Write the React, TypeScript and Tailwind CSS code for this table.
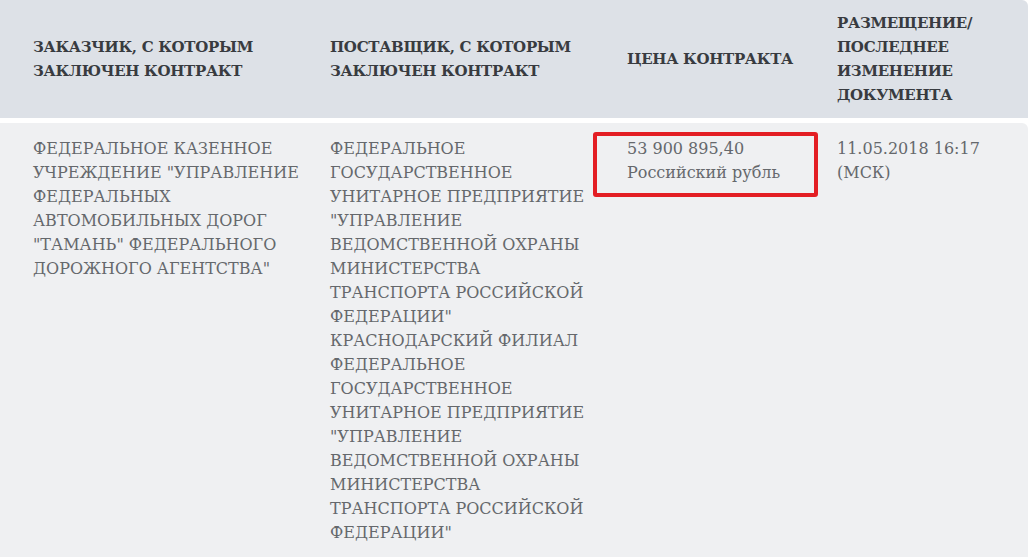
import React from "react";

const headers: string[][] = [
  ["ЗАКАЗЧИК, С КОТОРЫМ", "ЗАКЛЮЧЕН КОНТРАКТ"],
  ["ПОСТАВЩИК, С КОТОРЫМ", "ЗАКЛЮЧЕН КОНТРАКТ"],
  ["ЦЕНА КОНТРАКТА"],
  ["РАЗМЕЩЕНИЕ/", "ПОСЛЕДНЕЕ", "ИЗМЕНЕНИЕ", "ДОКУМЕНТА"],
];

const customer = [
  "ФЕДЕРАЛЬНОЕ КАЗЕННОЕ",
  'УЧРЕЖДЕНИЕ "УПРАВЛЕНИЕ',
  "ФЕДЕРАЛЬНЫХ",
  "АВТОМОБИЛЬНЫХ ДОРОГ",
  '"ТАМАНЬ" ФЕДЕРАЛЬНОГО',
  'ДОРОЖНОГО АГЕНТСТВА"',
];

const supplier = [
  "ФЕДЕРАЛЬНОЕ",
  "ГОСУДАРСТВЕННОЕ",
  "УНИТАРНОЕ ПРЕДПРИЯТИЕ",
  '"УПРАВЛЕНИЕ',
  "ВЕДОМСТВЕННОЙ ОХРАНЫ",
  "МИНИСТЕРСТВА",
  "ТРАНСПОРТА РОССИЙСКОЙ",
  'ФЕДЕРАЦИИ"',
  "КРАСНОДАРСКИЙ ФИЛИАЛ",
  "ФЕДЕРАЛЬНОЕ",
  "ГОСУДАРСТВЕННОЕ",
  "УНИТАРНОЕ ПРЕДПРИЯТИЕ",
  '"УПРАВЛЕНИЕ',
  "ВЕДОМСТВЕННОЙ ОХРАНЫ",
  "МИНИСТЕРСТВА",
  "ТРАНСПОРТА РОССИЙСКОЙ",
  'ФЕДЕРАЦИИ"',
];

const Lines = ({ lines }: { lines: string[] }) => (
  <>
    {lines.map((l, i) => (
      <span key={i} className="block whitespace-nowrap">
        {l}
      </span>
    ))}
  </>
);

const App: React.FC = () => {
  return (
    <div
      className="w-[1033px] h-[557px] overflow-hidden bg-white"
      style={{ fontFamily: '"DejaVu Serif", "Liberation Serif", serif' }}
    >
      <div className="w-[1028px]">
        {/* Шапка таблицы */}
        <div className="grid grid-cols-[297px_297px_210px_1fr] h-[118px] bg-[#dde1e7] rounded-tr-md text-[#383b40] font-bold text-[15px] tracking-[-0.3px] leading-6">
          {headers.map((h, i) => (
            <div key={i} className="flex items-center pl-[33px]">
              <div>
                <Lines lines={h} />
              </div>
            </div>
          ))}
        </div>

        {/* Строка */}
        <div className="mt-[5px] grid grid-cols-[297px_297px_210px_1fr] bg-[#eff0f2] rounded-tr-md text-[#65686c] text-[16px] leading-6 pt-[14px] pb-6">
          <div className="pl-[33px]">
            <Lines lines={customer} />
          </div>
          <div className="pl-[33px]">
            <Lines lines={supplier} />
          </div>
          <div className="pl-[33px] relative">
            <Lines lines={["53 900 895,40", "Российский рубль"]} />
            <div className="absolute left-[-1px] top-[-5px] w-[225px] h-[65px] border-4 border-[#e31e24] rounded-[3px]" />
          </div>
          <div className="pl-[33px]">
            <Lines lines={["11.05.2018 16:17", "(МСК)"]} />
          </div>
        </div>
      </div>
    </div>
  );
};

export default App;
